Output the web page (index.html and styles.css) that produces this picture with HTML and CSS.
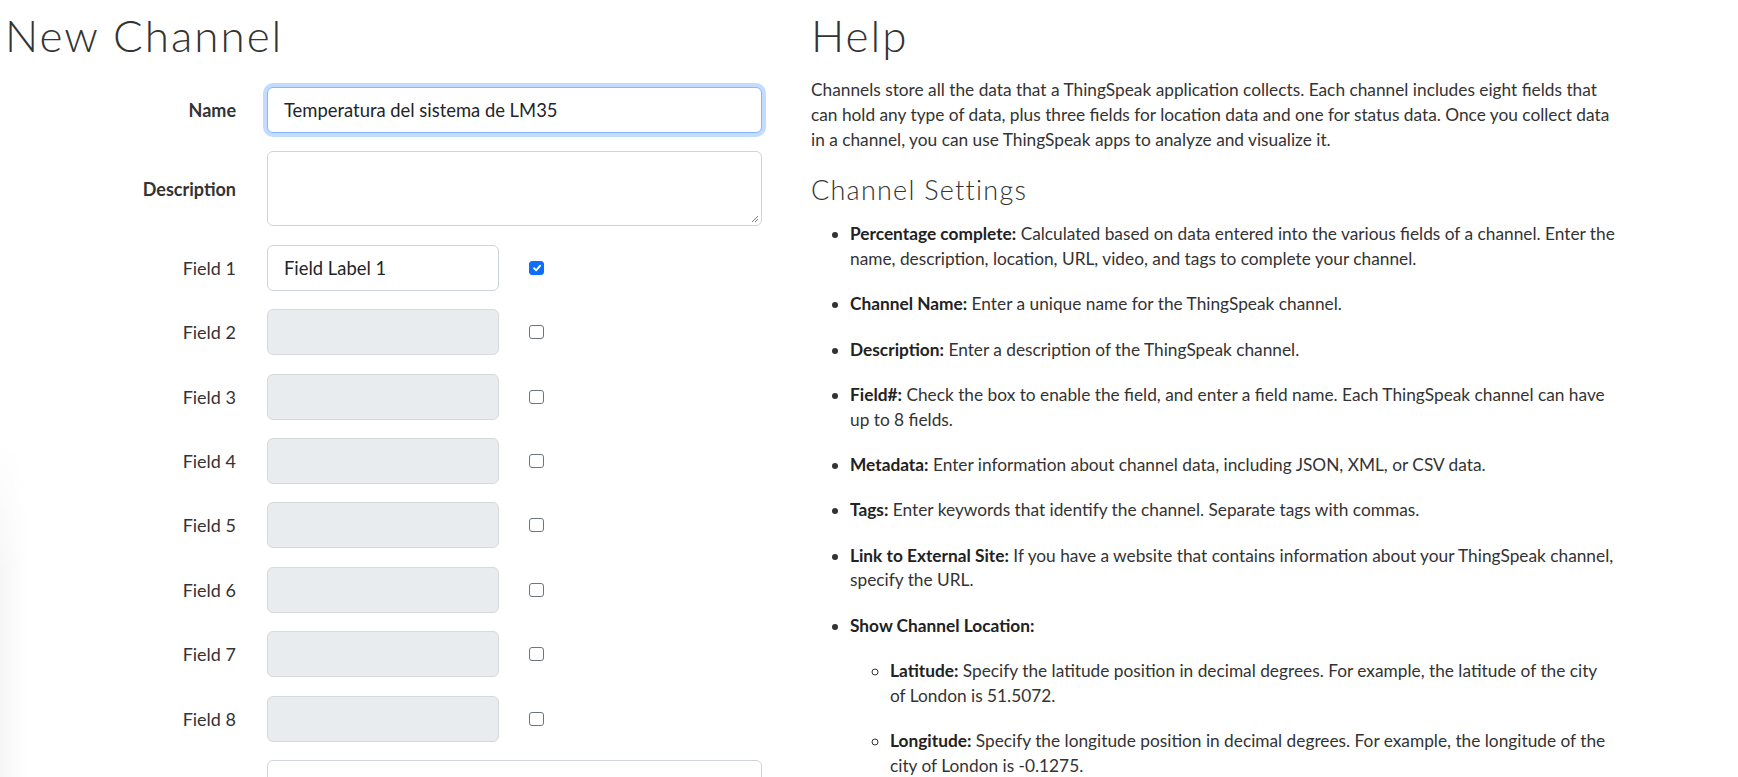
FILE: index.html
```html
<!DOCTYPE html>
<html lang="en">
<head>
<meta charset="utf-8">
<title>New Channel - ThingSpeak</title>
<link rel="stylesheet" href="styles.css">
</head>
<body>
<div class="edge-shade"></div>
<div class="page">
  <section class="col-form">
    <h1 class="title">New Channel</h1>
    <form class="channel-form">
      <div class="form-row">
        <label class="row-label bold">Name</label>
        <div class="ctrl focus wide"><span class="ctrl-text">Temperatura del sistema de LM35</span></div>
      </div>
      <div class="form-row">
        <label class="row-label bold">Description</label>
        <div class="ctrl textarea wide">
          <svg class="grip" width="8" height="8" viewBox="0 0 8 8"><path d="M7 1 L1 7 M7 4 L4 7" stroke="#777" stroke-width="1" fill="none"/></svg>
        </div>
      </div>
      <div class="form-row">
        <label class="row-label">Field 1</label>
        <div class="ctrl narrow"><span class="ctrl-text">Field Label 1</span></div>
        <span class="check checked"><svg width="10" height="10" viewBox="0 0 10 10"><path d="M2 5.2 L4.2 7.4 L8.2 2.6" stroke="#fff" stroke-width="1.8" fill="none" stroke-linecap="round" stroke-linejoin="round"/></svg></span>
      </div>
      <div class="form-row">
        <label class="row-label">Field 2</label>
        <div class="ctrl narrow disabled"></div>
        <span class="check"></span>
      </div>
      <div class="form-row">
        <label class="row-label">Field 3</label>
        <div class="ctrl narrow disabled"></div>
        <span class="check"></span>
      </div>
      <div class="form-row">
        <label class="row-label">Field 4</label>
        <div class="ctrl narrow disabled"></div>
        <span class="check"></span>
      </div>
      <div class="form-row">
        <label class="row-label">Field 5</label>
        <div class="ctrl narrow disabled"></div>
        <span class="check"></span>
      </div>
      <div class="form-row">
        <label class="row-label">Field 6</label>
        <div class="ctrl narrow disabled"></div>
        <span class="check"></span>
      </div>
      <div class="form-row">
        <label class="row-label">Field 7</label>
        <div class="ctrl narrow disabled"></div>
        <span class="check"></span>
      </div>
      <div class="form-row">
        <label class="row-label">Field 8</label>
        <div class="ctrl narrow disabled"></div>
        <span class="check"></span>
      </div>
      <div class="form-row">
        <label class="row-label bold">Metadata</label>
        <div class="ctrl textarea wide"></div>
      </div>
    </form>
  </section>
  <section class="col-help">
    <h1 class="title">Help</h1>
    <p class="intro">Channels store all the data that a ThingSpeak application collects. Each channel includes eight fields that can hold any type of data, plus three fields for location data and one for status data. Once you collect data in a channel, you can use ThingSpeak apps to analyze and visualize it.</p>
    <h3 class="subtitle">Channel Settings</h3>
    <ul class="help-list">
      <li><b>Percentage complete:</b> Calculated based on data entered into the various fields of a channel. Enter the name, description, location, URL, video, and tags to complete your channel.</li>
      <li><b>Channel Name:</b> Enter a unique name for the ThingSpeak channel.</li>
      <li><b>Description:</b> Enter a description of the ThingSpeak channel.</li>
      <li><b>Field#:</b> Check the box to enable the field, and enter a field name. Each ThingSpeak channel can have up to 8 fields.</li>
      <li><b>Metadata:</b> Enter information about channel data, including JSON, XML, or CSV data.</li>
      <li><b>Tags:</b> Enter keywords that identify the channel. Separate tags with commas.</li>
      <li><b>Link to External Site:</b> If you have a website that contains information about your ThingSpeak channel, specify the URL.</li>
      <li><b>Show Channel Location:</b>
        <ul class="sub-list">
          <li><b>Latitude:</b> Specify the latitude position in decimal degrees. For example, the latitude of the city of London is 51.5072.</li>
          <li><b>Longitude:</b> Specify the longitude position in decimal degrees. For example, the longitude of the city of London is -0.1275.</li>
        </ul>
      </li>
    </ul>
  </section>
</div>
</body>
</html>
```

FILE: styles.css
```css
html, body {
  margin: 0;
  padding: 0;
  background: #fff;
}
body {
  height: 777px;
  overflow: hidden;
  position: relative;
  font-family: "Lato", "Liberation Sans", sans-serif;
  color: #212529;
}
.edge-shade {
  position: absolute;
  left: 0;
  top: 440px;
  width: 28px;
  height: 337px;
  background: linear-gradient(to right, rgba(0, 0, 0, 0.035), rgba(0, 0, 0, 0));
  -webkit-mask-image: linear-gradient(to bottom, transparent, #000 40%);
  mask-image: linear-gradient(to bottom, transparent, #000 40%);
  pointer-events: none;
}
.page {
  display: flex;
  padding-left: 5px;
}
.col-form {
  width: 806px;
  flex: none;
}
.col-help {
  width: 800px;
  flex: none;
}
.title {
  font-family: "Lato", sans-serif;
  font-weight: 300;
  font-size: 44px;
  line-height: 1.2;
  letter-spacing: 2px;
  color: #333;
  margin: 8.6px 0 0 0;
}
.channel-form {
  margin-top: 25.6px;
}
.form-row {
  display: flex;
  align-items: center;
  margin-bottom: 18.4px;
}
.row-label {
  width: 262px;
  flex: none;
  text-align: right;
  padding-right: 31px;
  box-sizing: border-box;
  font-size: 18px;
  color: #333;
}
.row-label.bold {
  font-weight: 700;
}
.ctrl {
  box-sizing: border-box;
  height: 46px;
  border: 1px solid #ced4da;
  border-radius: 6px;
  background: #fff;
  display: flex;
  align-items: center;
  padding: 0 16px;
  font-size: 18.4px;
  color: #212529;
  position: relative;
  flex: none;
}
.ctrl.wide { width: 495px; }
.ctrl.narrow { width: 232px; }
.ctrl.textarea { height: 75px; }
.ctrl.disabled { background: #e9ecef; border-color: #d6d9dd; }
.ctrl.focus {
  border-color: #86b7fe;
  box-shadow: 0 0 0 4px rgba(13, 110, 253, 0.25);
}
.grip {
  position: absolute;
  right: 2px;
  bottom: 2px;
}
.check {
  box-sizing: border-box;
  width: 15px;
  height: 14px;
  margin-left: 30px;
  border: 1px solid #6c757d;
  border-radius: 3px;
  background: #fff;
  display: flex;
  align-items: center;
  justify-content: center;
  flex: none;
}
.check.checked {
  background: #0d6efd;
  border-color: #0d6efd;
}
.intro {
  margin: 16.8px 0 0 0;
  font-size: 17.3px;
  line-height: 24.75px;
  color: #333;
}
.subtitle {
  font-family: "Lato", sans-serif;
  font-weight: 300;
  font-size: 27px;
  line-height: 1.2;
  letter-spacing: 1.25px;
  color: #333;
  margin: 21.8px 0 0 0;
}
.help-list {
  margin: 15.5px -14px 0 0;
  padding-left: 39px;
  font-size: 17.3px;
  line-height: 24.75px;
  color: #333;
}
.help-list li {
  margin-bottom: 20.6px;
}
.help-list b {
  font-weight: 700;
  color: #222;
}
.sub-list {
  list-style: circle;
  padding-left: 40px;
  margin-top: 20.6px;
  margin-right: 14px;
}
```
